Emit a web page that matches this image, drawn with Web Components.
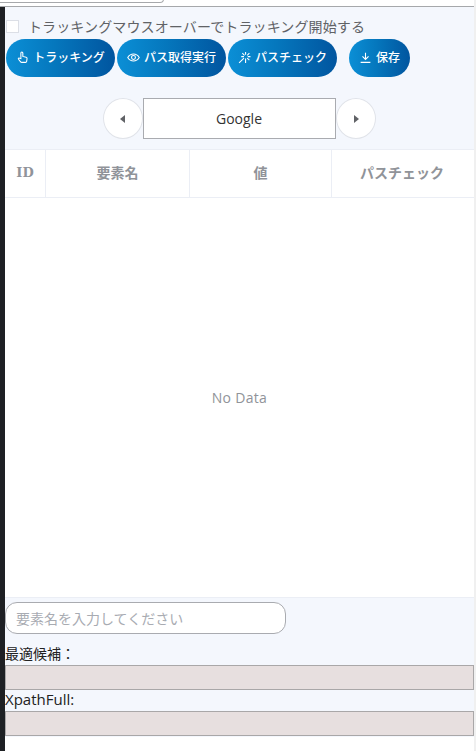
<!DOCTYPE html>
<html lang="ja">
<head>
<meta charset="utf-8">
<title>Tracking</title>
<style>
    html, body { margin: 0; padding: 0; background: #fff; }
</style>
</head>
<body>
<tracker-app></tracker-app>

<script>
const CJK = `"Noto Sans CJK JP", sans-serif`;
const LATIN_CJK = `"Open Sans", "Noto Sans CJK JP", sans-serif`;

class GradButton extends HTMLElement {
    constructor() {
        super();
        this.attachShadow({ mode: "open" }).innerHTML = `
        <style>
            :host {
                display: inline-flex;
                align-items: center;
                justify-content: center;
                gap: 4px;
                box-sizing: border-box;
                height: 38px;
                padding-bottom: 2px;
                border-radius: 19px;
                background: linear-gradient(90deg, #0b8fd6 0%, #0577bd 45%, #01559f 100%);
                color: #fff;
                font: 500 12px/1 ${CJK};
                white-space: nowrap;
            }
            ::slotted(svg) { width: 13px; height: 13px; flex: none; }
        </style>
        <slot></slot>
        `;
    }
}

class NavArrow extends HTMLElement {
    constructor() {
        super();
        const points = this.getAttribute("dir") === "left" ? "7,1 7,9 2,5" : "3,1 3,9 8,5";
        this.attachShadow({ mode: "open" }).innerHTML = `
        <style>
            :host {
                display: flex;
                align-items: center;
                justify-content: center;
                box-sizing: border-box;
                width: 40px;
                height: 41px;
                border: 1px solid #e0e3e9;
                border-radius: 50%;
                background: #fff;
            }
        </style>
        <svg width="10" height="10" viewBox="0 0 10 10"><polygon points="${points}" fill="#606266"/></svg>
        `;
    }
}

class DataTable extends HTMLElement {
    constructor() {
        super();
        this.attachShadow({ mode: "open" }).innerHTML = `
        <style>
            :host {
                display: flex;
                flex-direction: column;
                height: 449px;
                background: #fff;
                border-top: 1px solid #ebeef5;
                border-bottom: 1px solid #ebeef5;
                box-sizing: border-box;
                color: #909399;
            }
            .head {
                display: grid;
                grid-template-columns: 41px 144px 142px 142px;
                height: 48px;
                border-bottom: 1px solid #ebeef5;
                box-sizing: border-box;
            }
            .head div {
                display: flex;
                align-items: center;
                justify-content: center;
                box-sizing: border-box;
                padding-bottom: 3px;
                border-right: 1px solid #ebeef5;
                font: 700 14px ${CJK};
            }
            .head div:last-child { border-right: 0; padding-right: 2px; }
            .head .id { font-family: "DejaVu Serif", serif; font-size: 13px; padding-bottom: 2px; }
            .empty {
                flex: 1;
                display: flex;
                align-items: center;
                justify-content: center;
                font: 14px "Open Sans", sans-serif;
                letter-spacing: .3px;
            }
        </style>
        <div class="head">
            <div class="id">ID</div><div>要素名</div><div>値</div><div>パスチェック</div>
        </div>
        <div class="empty">No Data</div>
        `;
    }
}

class PathField extends HTMLElement {
    constructor() {
        super();
        this.attachShadow({ mode: "open" }).innerHTML = `
        <style>
            :host { display: block; font-size: 14px; line-height: 20px; }
            label {
                display: block;
                height: 21px;
                font-family: ${LATIN_CJK};
                color: #222;
                white-space: nowrap;
            }
            .box {
                box-sizing: border-box;
                height: 25px;
                background: #e7dfdf;
                border: 1px solid #a9a7a8;
            }
        </style>
        <label><slot></slot></label>
        <div class="box"></div>
        `;
    }
}

class TrackerApp extends HTMLElement {
    constructor() {
        super();
        this.attachShadow({ mode: "open" }).innerHTML = `
        <style>
            :host {
                display: block;
                width: 476px;
                height: 751px;
                overflow: hidden;
                background: #fff;
            }
            .frame {
                display: grid;
                grid-template-columns: 5px 1fr 2px;
                grid-template-rows: 7px 1fr;
                height: 100%;
            }
            .top {
                grid-column: 1 / 3;
                box-sizing: border-box;
                background: #fff;
                border-bottom: 1px solid #a6a8ab;
                overflow: hidden;
            }
            .top i {
                display: block;
                width: 163px;
                height: 2px;
                margin-top: -1px;
                border: 1px solid #a6a8ab;
                border-left: 0;
                border-radius: 0 0 8px 0;
                background: #fff;
            }
            .scroll { grid-column: 3; grid-row: 1 / 3; background: #f0f0f0; }
            .edge { background: #1e2024; }
            .main { min-width: 0; }
            .panel {
                height: 730px;
                background: #f4f7fd;
                display: flex;
                flex-direction: column;
            }
            .track {
                flex: none;
                height: 32px;
                display: flex;
                align-items: center;
                gap: 9px;
                padding-top: 5px;
                box-sizing: border-box;
                color: #606266;
                font: 14px ${CJK};
                letter-spacing: .12px;
                white-space: nowrap;
            }
            .track b {
                display: block;
                flex: none;
                width: 13px;
                height: 13px;
                margin: 1px 0 0 1px;
                box-sizing: border-box;
                background: #fff;
                border: 1px solid #dcdfe6;
            }
            .actions {
                flex: none;
                display: flex;
                height: 38px;
                margin-left: 1px;
            }
            .nav {
                flex: none;
                display: flex;
                justify-content: center;
                margin-top: 21px;
            }
            .current {
                box-sizing: border-box;
                width: 193px;
                height: 41px;
                padding-right: 1px;
                display: flex;
                align-items: center;
                justify-content: center;
                background: #fff;
                border: 1px solid #a9abb0;
                color: #333;
                font: 14px "Open Sans", sans-serif;
            }
            data-table { margin-top: 10px; flex: none; }
            .name {
                flex: none;
                box-sizing: border-box;
                width: 281px;
                height: 32px;
                margin-top: 4px;
                padding-left: 10px;
                display: flex;
                align-items: center;
                background: #fff;
                border: 1px solid #a9abb0;
                border-radius: 12px;
                color: #a8abb2;
                font: 14px ${CJK};
            }
            .fields { margin-top: 10px; display: flex; flex-direction: column; }
        </style>
        <div class="frame">
            <div class="top"><i></i></div>
            <div class="scroll"></div>
            <div class="edge"></div>
            <div class="main">
                <div class="panel">
                    <div class="track"><b></b><span>トラッキングマウスオーバーでトラッキング開始する</span></div>
                    <div class="actions">
                        <grad-button style="width:109px">
                            <svg viewBox="0 0 12 12" fill="none" stroke="#fff" stroke-width="1"><path d="M4.500 7V1.800a.9.9 0 0 1 1.800 0V5l3 .7c.7.2 1 .7.9 1.400l-.4 2.600c-.1.500-.4.800-.9.800H5.200c-.4 0-.7-.2-.9-.5L2.300 7.600c-.5-.7.3-1.500 1-1z"/></svg>
                            トラッキング
                        </grad-button>
                        <grad-button style="width:109px;margin-left:2px">
                            <svg viewBox="0 0 12 12" fill="none" stroke="#fff" stroke-width="1"><path d="M.7 6C2 3.900 3.900 2.800 6 2.800S10 3.900 11.300 6C10 8.100 8.100 9.200 6 9.200S2 8.100.7 6z"/><circle cx="6" cy="6" r="1.800"/></svg>
                            パス取得実行
                        </grad-button>
                        <grad-button style="width:109px;margin-left:2px">
                            <svg viewBox="0 0 12 12" fill="none" stroke="#fff" stroke-width="1"><path d="M7 1v2.500M7 7v4M3 5.200h2.500M9 5.200h2.500M4 2l2 2M10.500 2l-2 2M8.500 6.500l2 2M5.500 6.500l-4.500 4.500"/></svg>
                            パスチェック
                        </grad-button>
                        <grad-button style="width:61px;margin-left:12px">
                            <svg viewBox="0 0 12 12" fill="none" stroke="#fff" stroke-width="1"><path d="M6 1.500v6M3.200 5l2.800 2.800L8.800 5M1.500 10.500h9"/></svg>
                            保存
                        </grad-button>
                    </div>
                    <div class="nav">
                        <nav-arrow dir="left"></nav-arrow>
                        <div class="current">Google</div>
                        <nav-arrow dir="right"></nav-arrow>
                    </div>
                    <data-table></data-table>
                    <div class="name">要素名を入力してください</div>
                    <div class="fields">
                        <path-field>最適候補：</path-field>
                        <path-field style="font-size:15px;line-height:18px">XpathFull:</path-field>
                    </div>
                </div>
            </div>
        </div>
        `;
    }
}

customElements.define("grad-button", GradButton);
customElements.define("nav-arrow", NavArrow);
customElements.define("data-table", DataTable);
customElements.define("path-field", PathField);
customElements.define("tracker-app", TrackerApp);
</script>
</body>
</html>
